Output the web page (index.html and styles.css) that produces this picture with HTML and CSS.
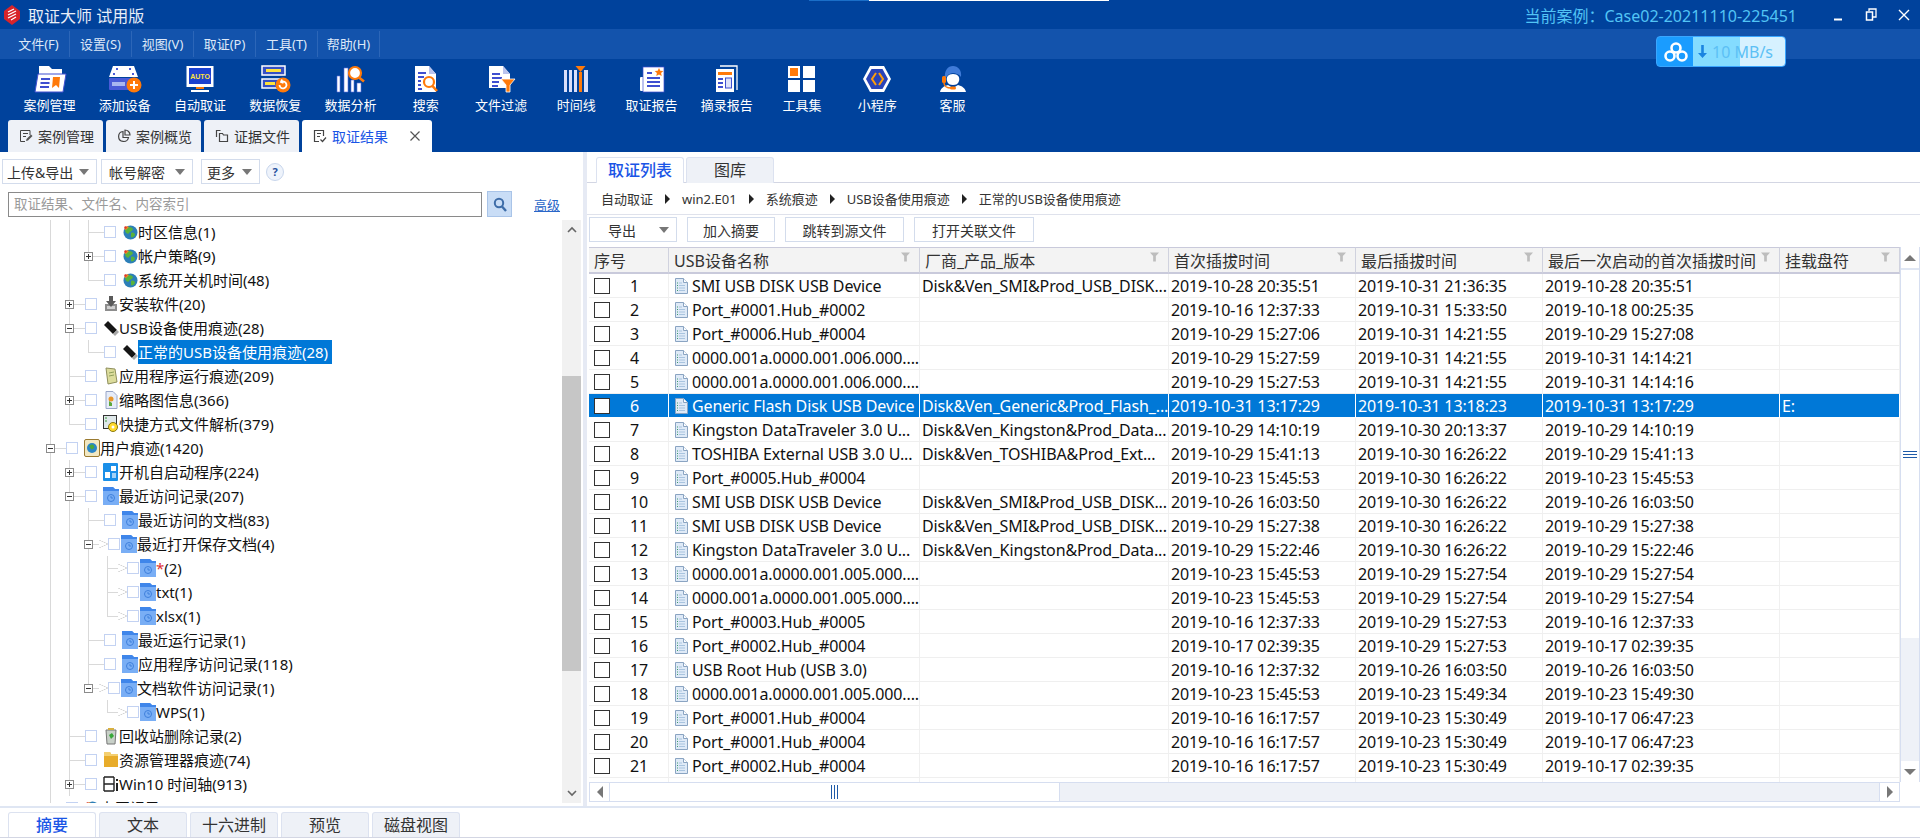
FILE: index.html
```html
<!DOCTYPE html>
<html lang="zh-CN">
<head>
<meta charset="UTF-8" />
<title>取证大师 试用版</title>
<link rel="stylesheet" href="styles.css">
</head>
<body>
<!-- shared icons -->
<svg class="defs" width="0" height="0">
  <symbol id="funnel" viewBox="0 0 10 10"><path d="M0 0h10L6.500 4v6h-3V4z" fill="#bdbdbd"/></symbol>
  <symbol id="file" viewBox="0 0 14 16"><path d="M1.500.5h8l4 4v11h-12z" fill="#dfeaf7" stroke="#8aa4c2"/><path d="M9.500.5v4h4" fill="#fff" stroke="#8aa4c2"/><path d="M3 5h1M3 7.500h1M3 10h1M3 12.500h1" stroke="#3d9a6a"/><path d="M5 5h3M5 7.500h6M5 10h6M5 12.500h6" stroke="#a9c4df"/></symbol>
  <symbol id="recent" viewBox="0 0 16 18"><path d="M0 0h10l2 2h4v16H0z" fill="#79aef5"/><path d="M0 0h10l2 2h4v2H0z" fill="#3f86ea"/><circle cx="8" cy="11" r="3.500" fill="none" stroke="#3f80dc"/><path d="M8 9v2h2" fill="none" stroke="#3f80dc"/></symbol>
  <symbol id="globe" viewBox="0 0 16 16"><circle cx="8.500" cy="8.500" r="7" fill="#2c7fb8"/><path d="M4 4c3-2 6-1 7 1-1 3-3 2-4 4S4 9 3 7z" fill="#58b33c"/><path d="M9 9c2-1 4 0 4 2-1 2-3 3-4 2z" fill="#58b33c"/><path d="M2 5l3-3 2 1-3 3z" fill="#f08a24"/><path d="M3 2l2 1-1 2-2-1z" fill="#e0392b"/></symbol>
  <symbol id="usb" viewBox="0 0 16 16"><path d="M1 5l4-4 9 9-4 4z" fill="#161616"/><path d="M10 14l4-4 2 2-4 4z" fill="#a8a8a8"/></symbol>
</svg>

<div class="titlebar">
  <svg class="logo" width="16" height="20" viewBox="0 0 16 20"><path d="M8 0l8 6v8l-8 6-8-6V6z" fill="#d8242a"/><path d="M4 7l6-3M4 10l8-4M4 13l8-4M7 15l5-3" stroke="#fff" stroke-width="1.300"/></svg>
  <span class="app-name">取证大师 试用版</span>
  <span class="case-name">当前案例：Case02-20211110-225451</span>
  <div class="win-btns">
    <svg width="12" height="12" viewBox="0 0 12 12"><path d="M2 10.500h8" stroke="#fff" stroke-width="2"/></svg>
    <svg width="12" height="14" viewBox="0 0 12 14"><path d="M4 3V1h7v8H8" fill="none" stroke="#fff" stroke-width="1.300"/><path d="M1.500 4h6v8h-6z" fill="none" stroke="#fff" stroke-width="1.500"/></svg>
    <svg width="12" height="12" viewBox="0 0 12 12"><path d="M1 1l10 10M11 1L1 11" stroke="#fff" stroke-width="1.400"/></svg>
  </div>
</div>
<div class="top-strip"></div>

<nav class="menubar">
  <span>文件(F)</span><span>设置(S)</span><span>视图(V)</span><span>取证(P)</span><span>工具(T)</span><span>帮助(H)</span>
</nav>

<!-- download speed widget floats above the window -->
<div class="speed">
  <svg class="speed-logo" width="26" height="24" viewBox="0 0 26 24"><g fill="none" stroke="#fff" stroke-width="2.600"><circle cx="13" cy="8" r="4.500"/><circle cx="7" cy="16" r="4.500"/><circle cx="19" cy="16" r="4.500"/></g></svg>
  <svg class="speed-arrow" width="9" height="13" viewBox="0 0 9 13"><path d="M3.200 0h2.600v8H9l-4.500 5L0 8h3.200z" fill="#1a84e0"/></svg>
  <span class="speed-val">10 MB/s</span>
</div>

<div class="toolbar">
  <div class="tool">
    <svg viewBox="0 0 34 28"><path d="M6 1h10l3 3h10v6H6z" fill="#fff"/><path d="M5 9h28l-3 18H2z" fill="#fff" stroke="#3f4fd0"/><path d="M8 14h9M7.500 18h9M7 22h9" stroke="#3f4fd0" stroke-width="2"/><path d="M20 12h7l-1 11-3-3-4 3z" fill="#ff7a0a"/></svg>
    <span>案例管理</span>
  </div>
  <div class="tool">
    <svg viewBox="0 0 34 28"><path d="M5 1h21l4 11H1z" fill="#fff"/><path d="M8 4h2M21 4h2M5 9h2M24 9h2" stroke="#4a5bd8" stroke-width="2"/><rect x="1" y="13" width="28" height="12" rx="1" fill="#4a5bd8"/><rect x="4" y="17" width="13" height="4" fill="#a9b6f0"/><circle cx="26" cy="20" r="7.500" fill="#ff7a0a"/><path d="M26 16v8M22 20h8" stroke="#fff" stroke-width="2"/></svg>
    <span>添加设备</span>
  </div>
  <div class="tool">
    <svg viewBox="0 0 34 28"><rect x="3.500" y="1" width="27" height="21" fill="#fff"/><rect x="6" y="3" width="22" height="16" fill="#1c42d0"/><text class="auto" x="17" y="14" text-anchor="middle">AUTO</text><rect x="13" y="22" width="8" height="2" fill="#ff7a0a"/><rect x="8" y="25" width="18" height="2" fill="#fff"/></svg>
    <span>自动取证</span>
  </div>
  <div class="tool">
    <svg viewBox="0 0 34 28"><rect x="4" y="1" width="23" height="9" fill="#3550c4" stroke="#fff" stroke-width="1.500"/><rect x="8" y="4" width="15" height="3" fill="#ffe23c"/><rect x="4" y="14" width="19" height="9" fill="#3550c4" stroke="#fff" stroke-width="1.500"/><rect x="7" y="17" width="10" height="3" fill="#ffe23c"/><circle cx="25" cy="20" r="7.500" fill="#ff7a0a"/><path d="M21.500 20a3.500 3.500 0 1 0 2-3.200M24 14.500l-1 2.500 2.500 1" fill="none" stroke="#fff" stroke-width="1.800"/></svg>
    <span>数据恢复</span>
  </div>
  <div class="tool">
    <svg viewBox="0 0 34 28"><path d="M3 11h3v16H3zM10 3h4v24h-4zM17 15h3v12h-3zM23 18h4v9h-4z" fill="#fff" stroke="#5a6fe0" stroke-width=".6"/><circle cx="21" cy="8" r="6" fill="#fff" stroke="#ff7a0a" stroke-width="2.200"/><path d="M25 12.500l5 4" stroke="#ff7a0a" stroke-width="2.600"/></svg>
    <span>数据分析</span>
  </div>
  <div class="tool">
    <svg viewBox="0 0 34 28"><path d="M6 1h14l7 8v18H6z" fill="#fff"/><path d="M20 1v8h7" fill="#b9c3ee"/><path d="M9 8h8M9 12h6M9 16h3M9 20h3M9 24h4" stroke="#3f4fd0" stroke-width="1.800"/><circle cx="20" cy="17" r="5" fill="#fff" stroke="#ff7a0a" stroke-width="2.200"/><path d="M23.500 21l4.500 5" stroke="#ff7a0a" stroke-width="2.600"/></svg>
    <span>搜索</span>
  </div>
  <div class="tool">
    <svg viewBox="0 0 34 28"><path d="M5 1h14l7 8v14H5z" fill="#fff"/><path d="M19 1v8h7" fill="#b9c3ee"/><path d="M8 9h8M8 13h10M8 17h7M8 21h6" stroke="#3f4fd0" stroke-width="1.800"/><path d="M17 14h14l-5 6v7h-4v-7z" fill="#ff7a0a" stroke="#fff" stroke-width=".8"/></svg>
    <span>文件过滤</span>
  </div>
  <div class="tool">
    <svg viewBox="0 0 34 28"><path d="M5 5h3v22H5zM10 5h3v22h-3zM15 5h3v22h-3zM25 5h4v22h-4z" fill="#d9defa"/><path d="M20 7h3v20h-3z" fill="#ff7a0a"/><path d="M16.500 1h10l-5 6z" fill="#ff7a0a"/></svg>
    <span>时间线</span>
  </div>
  <div class="tool">
    <svg viewBox="0 0 34 28"><rect x="5" y="12" width="5" height="14" rx="1" fill="#fff"/><rect x="8" y="2" width="21" height="25" fill="#fff" stroke="#3f4fd0" stroke-width=".7"/><path d="M24 3l1.300 2.800 3 .3-2.200 2 .6 3-2.700-1.500-2.700 1.500.6-3-2.200-2 3-.3z" fill="#ff7a0a"/><path d="M12 8h5M12 13h13M12 17h13M12 21h13" stroke="#3f4fd0" stroke-width="1.800"/></svg>
    <span>取证报告</span>
  </div>
  <div class="tool">
    <svg viewBox="0 0 34 28"><path d="M10 1h17v24" fill="none" stroke="#fff" stroke-width="1.300"/><rect x="6" y="4" width="18" height="23" fill="#fff"/><rect x="8" y="7" width="14" height="3" fill="#ff7a0a"/><path d="M8 14h5M8 18h5M8 22h5" stroke="#3f4fd0" stroke-width="2"/><rect x="15.500" y="13" width="6" height="10" fill="#dde2fa" stroke="#3f4fd0"/></svg>
    <span>摘录报告</span>
  </div>
  <div class="tool">
    <svg viewBox="0 0 34 28"><rect x="3" y="1" width="12" height="12" fill="#fff"/><rect x="5" y="3" width="8" height="8" fill="#ff7a0a"/><rect x="18" y="1" width="12" height="12" fill="#fff"/><rect x="3" y="15" width="12" height="12" fill="#fff"/><rect x="18" y="15" width="12" height="12" fill="#fff"/></svg>
    <span>工具集</span>
  </div>
  <div class="tool">
    <svg viewBox="0 0 34 28"><path d="M10 1h14l7 13-7 13H10L3 14z" fill="#fff"/><path d="M11.500 4h11l5.500 10-5.500 10h-11L6 14z" fill="#2a43b8"/><path d="M16 8l-4 6 4 6M19 8l4 6-4 6" fill="none" stroke="#ff9d0a" stroke-width="2"/></svg>
    <span>小程序</span>
  </div>
  <div class="tool">
    <svg viewBox="0 0 34 28"><path d="M17 9c5 0 7 3 6 7-1 3-3 4-6 4s-5-1-6-4c-1-4 1-7 6-7z" fill="#fff"/><path d="M9 14C8 5 12 1 17 1s9 4 8 11c-2-3-6-4-8-4-3 0-6 2-8 6z" fill="#3f7bd8"/><path d="M4 27c1-4 4-6 8-7l5 3 5-3c4 1 7 3 8 7z" fill="#fff"/><rect x="6" y="11" width="4" height="7" rx="1.500" fill="#ff7a0a"/><path d="M8 18c0 3 3 5 7 5" fill="none" stroke="#ff7a0a" stroke-width="1.500"/><rect x="14" y="21.500" width="6" height="3" rx="1.500" fill="#ff7a0a"/></svg>
    <span>客服</span>
  </div>
</div>

<div class="tabs">
  <div class="tab">
    <svg width="14" height="14" viewBox="0 0 14 14"><path d="M11 6V1.500H1.500v11H6M4 4.500h5M4 7.500h3" fill="none" stroke="#444"/><path d="M7 12l.5-2L12 5.500l1.500 1.500L9 11.500z" fill="#555"/></svg>
    案例管理
  </div>
  <div class="tab">
    <svg width="14" height="14" viewBox="0 0 14 14"><path d="M6 2.500a5 5 0 1 0 5.500 6H6z" fill="none" stroke="#444" stroke-width="1.200"/><path d="M8 1a5 5 0 0 1 5 5H8z" fill="none" stroke="#444" stroke-width="1.200"/></svg>
    案例概览
  </div>
  <div class="tab">
    <svg width="14" height="14" viewBox="0 0 14 14"><path d="M1.500 8V1.500h4M4.500 12.500v-8h3l1 1.500h4v6.500z" fill="none" stroke="#444" stroke-width="1.200"/></svg>
    证据文件
  </div>
  <div class="tab active">
    <svg width="14" height="14" viewBox="0 0 14 14"><path d="M6 12.500H1.500v-11h9V7M4 4.500h4M4 7.500h3" fill="none" stroke="#444" stroke-width="1.200"/><path d="M7.500 10.500l2 2 3.500-4" fill="none" stroke="#444" stroke-width="1.200"/></svg>
    取证结果
    <svg class="tab-close" width="12" height="12" viewBox="0 0 12 12"><path d="M1.500 1.500l9 9M10.500 1.500l-9 9" stroke="#555" stroke-width="1.200"/></svg>
  </div>
</div>

<div class="workspace">
  <!-- left: result tree -->
  <aside class="left-pane">
    <div class="left-btns">
      <button class="btn b-upload">上传&amp;导出<i class="caret"></i></button>
      <button class="btn b-account">帐号解密<i class="caret"></i></button>
      <button class="btn b-more">更多<i class="caret"></i></button>
      <span class="help">?</span>
    </div>
    <div class="search-row">
      <div class="search-box">取证结果、文件名、内容索引</div>
      <div class="search-btn"><svg width="14" height="15" viewBox="0 0 14 15"><circle cx="6" cy="6" r="4.200" fill="none" stroke="#3d6ca8" stroke-width="2"/><path d="M9 9.500l4 4.500" stroke="#3d6ca8" stroke-width="2.400"/></svg></div>
      <a class="adv">高级</a>
    </div>
    <div class="tree-wrap">
      <div class="tree">
        <div class="row"><i class="g v"></i><i class="g v"></i><i class="g w16 t"></i><i class="check"></i><svg class="ic"><use href="#globe"/></svg><span class="txt">时区信息(1)</span></div>
        <div class="row"><i class="g v"></i><i class="g v"></i><i class="g w16 t"><b class="x plus"></b></i><i class="check"></i><svg class="ic"><use href="#globe"/></svg><span class="txt">帐户策略(9)</span></div>
        <div class="row"><i class="g v"></i><i class="g v"></i><i class="g w16 l"></i><i class="check"></i><svg class="ic"><use href="#globe"/></svg><span class="txt">系统开关机时间(48)</span></div>
        <div class="row"><i class="g v"></i><i class="g w16 t"><b class="x plus"></b></i><i class="check"></i><svg class="ic" viewBox="0 0 16 16"><rect x="2" y="8" width="12" height="7" fill="#8d8d8d"/><rect x="4" y="10" width="8" height="3" fill="#d0d0d0"/><path d="M6 0h4v5h3l-5 6-5-6h3z" fill="#5a5a5a"/></svg><span class="txt">安装软件(20)</span></div>
        <div class="row"><i class="g v"></i><i class="g w16 t"><b class="x minus"></b></i><i class="check"></i><svg class="ic"><use href="#usb"/></svg><span class="txt">USB设备使用痕迹(28)</span></div>
        <div class="row"><i class="g v"></i><i class="g v"></i><i class="g w16 l"></i><i class="check"></i><svg class="ic"><use href="#usb"/></svg><span class="txt sel">正常的USB设备使用痕迹(28)</span></div>
        <div class="row"><i class="g v"></i><i class="g w16 t"></i><i class="check"></i><svg class="ic" viewBox="0 0 16 18"><path d="M3 1l9 1 2 13-9 2z" fill="#dcdc9c" stroke="#8f8f5c"/><path d="M6 6l5-1M6 9l5-1" stroke="#8fa05c"/></svg><span class="txt">应用程序运行痕迹(209)</span></div>
        <div class="row"><i class="g v"></i><i class="g w16 t"><b class="x plus"></b></i><i class="check"></i><svg class="ic" viewBox="0 0 16 18"><path d="M3 .5h7l4 4v13H3z" fill="#e6ecf8" stroke="#98a6c8"/><circle cx="8" cy="8" r="2.500" fill="#e8962a"/><path d="M6 10l3 2v3h-3z" fill="#5ca83c"/></svg><span class="txt">缩略图信息(366)</span></div>
        <div class="row"><i class="g v"></i><i class="g w16 l"></i><i class="check"></i><svg class="ic" viewBox="0 0 16 18"><rect x=".5" y=".5" width="13" height="13" fill="#dfe8ea" stroke="#333"/><path d="M2 3h2M2 6h2" stroke="#3a9a3a"/><circle cx="10" cy="12" r="4.500" fill="#ffd92a" stroke="#8a7a10"/><circle cx="10" cy="12" r="1.500" fill="#fff"/></svg><span class="txt">快捷方式文件解析(379)</span></div>
        <div class="row"><i class="g w16 t"><b class="x minus"></b></i><i class="check"></i><svg class="ic" viewBox="0 0 16 18"><rect x=".5" y=".5" width="15" height="17" rx="1.500" fill="#f2e8c2" stroke="#9a7a30"/><circle cx="8" cy="9" r="5" fill="#2a86c8"/><path d="M5 7c2-2 4-2 5 0s-2 4-3 3z" fill="#4aa83a"/></svg><span class="txt">用户痕迹(1420)</span></div>
        <div class="row"><i class="g v"></i><i class="g w16 t"><b class="x plus"></b></i><i class="check"></i><svg class="ic" viewBox="0 0 16 18"><rect width="15" height="18" rx="1" fill="#1a8fe8"/><path d="M8 3h5v5H8zM2 9h5v6H2z" fill="#fff"/><path d="M9 10h4v5h-4z" fill="#fff" opacity=".6"/></svg><span class="txt">开机自启动程序(224)</span></div>
        <div class="row"><i class="g v"></i><i class="g w16 t"><b class="x minus"></b></i><i class="check"></i><svg class="ic"><use href="#recent"/></svg><span class="txt">最近访问记录(207)</span></div>
        <div class="row"><i class="g v"></i><i class="g v"></i><i class="g w16 t"></i><i class="check"></i><svg class="ic"><use href="#recent"/></svg><span class="txt">最近访问的文档(83)</span></div>
        <div class="row"><i class="g v"></i><i class="g v"></i><i class="g w11 t"><b class="x minus"></b></i><i class="tri"></i><i class="check tight"></i><svg class="ic"><use href="#recent"/></svg><span class="txt">最近打开保存文档(4)</span></div>
        <div class="row"><i class="g v"></i><i class="g v"></i><i class="g v"></i><i class="g w11 t"></i><i class="tri"></i><i class="check tight"></i><svg class="ic"><use href="#recent"/></svg><span class="txt"><em>*</em>(2)</span></div>
        <div class="row"><i class="g v"></i><i class="g v"></i><i class="g v"></i><i class="g w11 t"></i><i class="tri"></i><i class="check tight"></i><svg class="ic"><use href="#recent"/></svg><span class="txt">txt(1)</span></div>
        <div class="row"><i class="g v"></i><i class="g v"></i><i class="g v"></i><i class="g w11 l"></i><i class="tri"></i><i class="check tight"></i><svg class="ic"><use href="#recent"/></svg><span class="txt">xlsx(1)</span></div>
        <div class="row"><i class="g v"></i><i class="g v"></i><i class="g w16 t"></i><i class="check"></i><svg class="ic"><use href="#recent"/></svg><span class="txt">最近运行记录(1)</span></div>
        <div class="row"><i class="g v"></i><i class="g v"></i><i class="g w16 t"></i><i class="check"></i><svg class="ic"><use href="#recent"/></svg><span class="txt">应用程序访问记录(118)</span></div>
        <div class="row"><i class="g v"></i><i class="g v"></i><i class="g w11 l"><b class="x minus"></b></i><i class="tri"></i><i class="check tight"></i><svg class="ic"><use href="#recent"/></svg><span class="txt">文档软件访问记录(1)</span></div>
        <div class="row"><i class="g v"></i><i class="g v"></i><i class="g"></i><i class="g w11 l"></i><i class="tri"></i><i class="check tight"></i><svg class="ic"><use href="#recent"/></svg><span class="txt">WPS(1)</span></div>
        <div class="row"><i class="g v"></i><i class="g w16 t"></i><i class="check"></i><svg class="ic" viewBox="0 0 16 18"><path d="M3 3h10l-1 14H4z" fill="#c8d0c8" stroke="#777"/><path d="M5 1h6v2H5z" fill="#d8b040"/><path d="M6 8l3-2 2 3-3 3z" fill="#3aa83a"/></svg><span class="txt">回收站删除记录(2)</span></div>
        <div class="row"><i class="g v"></i><i class="g w16 t"></i><i class="check"></i><svg class="ic" viewBox="0 0 16 18"><path d="M1 1h6l1 2h7v13H1z" fill="#e8ac2a"/><path d="M1 1h6l1 2h7v2H1z" fill="#f4cf70"/></svg><span class="txt">资源管理器痕迹(74)</span></div>
        <div class="row"><i class="g v"></i><i class="g w16 t"><b class="x plus"></b></i><i class="check"></i><svg class="ic" viewBox="0 0 16 18"><path d="M1 2v14M11 2v14M1 2h10M1 9h10M1 16h10" fill="none" stroke="#222" stroke-width="1.400"/><path d="M14 4v2M14 8v8" stroke="#222" stroke-width="2"/></svg><span class="txt">Win10 时间轴(913)</span></div>
        <div class="row"><i class="g w16 t"><b class="x plus"></b></i><i class="check"></i><svg class="ic"><use href="#globe"/></svg><span class="txt">上网记录</span></div>
      </div>
      <div class="tree-scroll">
        <svg class="chev" width="10" height="8" viewBox="0 0 10 8"><path d="M1 6l4-4 4 4" fill="none" stroke="#666" stroke-width="1.600"/></svg>
        <div class="tree-thumb"></div>
        <svg class="chev chev-end" width="10" height="8" viewBox="0 0 10 8"><path d="M1 2l4 4 4-4" fill="none" stroke="#666" stroke-width="1.600"/></svg>
      </div>
    </div>
  </aside>

  <div class="splitter"></div>

  <!-- right: evidence list -->
  <main class="right-pane">
    <div class="sub-tabs">
      <div class="sub-tab active">取证列表</div>
      <div class="sub-tab">图库</div>
    </div>
    <div class="crumbs">
      <span>自动取证</span><i class="sep"></i><span>win2.E01</span><i class="sep"></i><span>系统痕迹</span><i class="sep"></i><span>USB设备使用痕迹</span><i class="sep"></i><span>正常的USB设备使用痕迹</span>
    </div>
    <div class="actions">
      <button class="btn act-export">导出<i class="caret"></i></button>
      <button class="btn act-add">加入摘要</button>
      <button class="btn act-jump">跳转到源文件</button>
      <button class="btn act-open">打开关联文件</button>
    </div>
    <div class="grid-wrap">
      <div class="grid">
        <table>
          <colgroup><col class="c1"><col class="c2"><col class="c3"><col class="c4"><col class="c5"><col class="c6"><col class="c7"></colgroup>
          <thead>
            <tr>
              <th>序号</th>
              <th class="pad"><div class="th-in">USB设备名称<svg class="fn"><use href="#funnel"/></svg></div></th>
              <th><div class="th-in">厂商_产品_版本<svg class="fn"><use href="#funnel"/></svg></div></th>
              <th><div class="th-in">首次插拔时间<svg class="fn"><use href="#funnel"/></svg></div></th>
              <th><div class="th-in">最后插拔时间<svg class="fn"><use href="#funnel"/></svg></div></th>
              <th><div class="th-in">最后一次启动的首次插拔时间<svg class="fn"><use href="#funnel"/></svg></div></th>
              <th><div class="th-in">挂载盘符<svg class="fn"><use href="#funnel"/></svg></div></th>
            </tr>
          </thead>
          <tbody>
            <tr><td><div class="no"><i class="box"></i>1</div></td><td><div class="nm"><svg class="doc"><use href="#file"/></svg>SMI USB DISK USB Device</div></td><td>Disk&amp;Ven_SMI&amp;Prod_USB_DISK...</td><td>2019-10-28 20:35:51</td><td>2019-10-31 21:36:35</td><td>2019-10-28 20:35:51</td><td></td></tr>
            <tr><td><div class="no"><i class="box"></i>2</div></td><td><div class="nm"><svg class="doc"><use href="#file"/></svg>Port_#0001.Hub_#0002</div></td><td></td><td>2019-10-16 12:37:33</td><td>2019-10-31 15:33:50</td><td>2019-10-18 00:25:35</td><td></td></tr>
            <tr><td><div class="no"><i class="box"></i>3</div></td><td><div class="nm"><svg class="doc"><use href="#file"/></svg>Port_#0006.Hub_#0004</div></td><td></td><td>2019-10-29 15:27:06</td><td>2019-10-31 14:21:55</td><td>2019-10-29 15:27:08</td><td></td></tr>
            <tr><td><div class="no"><i class="box"></i>4</div></td><td><div class="nm"><svg class="doc"><use href="#file"/></svg>0000.001a.0000.001.006.000....</div></td><td></td><td>2019-10-29 15:27:59</td><td>2019-10-31 14:21:55</td><td>2019-10-31 14:14:21</td><td></td></tr>
            <tr><td><div class="no"><i class="box"></i>5</div></td><td><div class="nm"><svg class="doc"><use href="#file"/></svg>0000.001a.0000.001.006.000....</div></td><td></td><td>2019-10-29 15:27:53</td><td>2019-10-31 14:21:55</td><td>2019-10-31 14:14:16</td><td></td></tr>
            <tr class="selected"><td><div class="no"><i class="box"></i>6</div></td><td><div class="nm"><svg class="doc"><use href="#file"/></svg>Generic Flash Disk USB Device</div></td><td>Disk&amp;Ven_Generic&amp;Prod_Flash_...</td><td>2019-10-31 13:17:29</td><td>2019-10-31 13:18:23</td><td>2019-10-31 13:17:29</td><td>E:</td></tr>
            <tr><td><div class="no"><i class="box"></i>7</div></td><td><div class="nm"><svg class="doc"><use href="#file"/></svg>Kingston DataTraveler 3.0 U...</div></td><td>Disk&amp;Ven_Kingston&amp;Prod_Data...</td><td>2019-10-29 14:10:19</td><td>2019-10-30 20:13:37</td><td>2019-10-29 14:10:19</td><td></td></tr>
            <tr><td><div class="no"><i class="box"></i>8</div></td><td><div class="nm"><svg class="doc"><use href="#file"/></svg>TOSHIBA External USB 3.0 U...</div></td><td>Disk&amp;Ven_TOSHIBA&amp;Prod_Ext...</td><td>2019-10-29 15:41:13</td><td>2019-10-30 16:26:22</td><td>2019-10-29 15:41:13</td><td></td></tr>
            <tr><td><div class="no"><i class="box"></i>9</div></td><td><div class="nm"><svg class="doc"><use href="#file"/></svg>Port_#0005.Hub_#0004</div></td><td></td><td>2019-10-23 15:45:53</td><td>2019-10-30 16:26:22</td><td>2019-10-23 15:45:53</td><td></td></tr>
            <tr><td><div class="no"><i class="box"></i>10</div></td><td><div class="nm"><svg class="doc"><use href="#file"/></svg>SMI USB DISK USB Device</div></td><td>Disk&amp;Ven_SMI&amp;Prod_USB_DISK...</td><td>2019-10-26 16:03:50</td><td>2019-10-30 16:26:22</td><td>2019-10-26 16:03:50</td><td></td></tr>
            <tr><td><div class="no"><i class="box"></i>11</div></td><td><div class="nm"><svg class="doc"><use href="#file"/></svg>SMI USB DISK USB Device</div></td><td>Disk&amp;Ven_SMI&amp;Prod_USB_DISK...</td><td>2019-10-29 15:27:38</td><td>2019-10-30 16:26:22</td><td>2019-10-29 15:27:38</td><td></td></tr>
            <tr><td><div class="no"><i class="box"></i>12</div></td><td><div class="nm"><svg class="doc"><use href="#file"/></svg>Kingston DataTraveler 3.0 U...</div></td><td>Disk&amp;Ven_Kingston&amp;Prod_Data...</td><td>2019-10-29 15:22:46</td><td>2019-10-30 16:26:22</td><td>2019-10-29 15:22:46</td><td></td></tr>
            <tr><td><div class="no"><i class="box"></i>13</div></td><td><div class="nm"><svg class="doc"><use href="#file"/></svg>0000.001a.0000.001.005.000....</div></td><td></td><td>2019-10-23 15:45:53</td><td>2019-10-29 15:27:54</td><td>2019-10-29 15:27:54</td><td></td></tr>
            <tr><td><div class="no"><i class="box"></i>14</div></td><td><div class="nm"><svg class="doc"><use href="#file"/></svg>0000.001a.0000.001.005.000....</div></td><td></td><td>2019-10-23 15:45:53</td><td>2019-10-29 15:27:54</td><td>2019-10-29 15:27:54</td><td></td></tr>
            <tr><td><div class="no"><i class="box"></i>15</div></td><td><div class="nm"><svg class="doc"><use href="#file"/></svg>Port_#0003.Hub_#0005</div></td><td></td><td>2019-10-16 12:37:33</td><td>2019-10-29 15:27:53</td><td>2019-10-16 12:37:33</td><td></td></tr>
            <tr><td><div class="no"><i class="box"></i>16</div></td><td><div class="nm"><svg class="doc"><use href="#file"/></svg>Port_#0002.Hub_#0004</div></td><td></td><td>2019-10-17 02:39:35</td><td>2019-10-29 15:27:53</td><td>2019-10-17 02:39:35</td><td></td></tr>
            <tr><td><div class="no"><i class="box"></i>17</div></td><td><div class="nm"><svg class="doc"><use href="#file"/></svg>USB Root Hub (USB 3.0)</div></td><td></td><td>2019-10-16 12:37:32</td><td>2019-10-26 16:03:50</td><td>2019-10-26 16:03:50</td><td></td></tr>
            <tr><td><div class="no"><i class="box"></i>18</div></td><td><div class="nm"><svg class="doc"><use href="#file"/></svg>0000.001a.0000.001.005.000....</div></td><td></td><td>2019-10-23 15:45:53</td><td>2019-10-23 15:49:34</td><td>2019-10-23 15:49:30</td><td></td></tr>
            <tr><td><div class="no"><i class="box"></i>19</div></td><td><div class="nm"><svg class="doc"><use href="#file"/></svg>Port_#0001.Hub_#0004</div></td><td></td><td>2019-10-16 16:17:57</td><td>2019-10-23 15:30:49</td><td>2019-10-17 06:47:23</td><td></td></tr>
            <tr><td><div class="no"><i class="box"></i>20</div></td><td><div class="nm"><svg class="doc"><use href="#file"/></svg>Port_#0001.Hub_#0004</div></td><td></td><td>2019-10-16 16:17:57</td><td>2019-10-23 15:30:49</td><td>2019-10-17 06:47:23</td><td></td></tr>
            <tr><td><div class="no"><i class="box"></i>21</div></td><td><div class="nm"><svg class="doc"><use href="#file"/></svg>Port_#0002.Hub_#0004</div></td><td></td><td>2019-10-16 16:17:57</td><td>2019-10-23 15:30:49</td><td>2019-10-17 02:39:35</td><td></td></tr>
            <tr><td><div class="no"><i class="box"></i></div></td><td><div class="nm"><svg class="doc"><use href="#file"/></svg></div></td><td></td><td></td><td></td><td></td><td></td></tr>
          </tbody>
        </table>
      </div>
      <div class="vbar">
        <div class="vbtn"><i class="up"></i></div>
        <div class="vthumb"><i class="grip-h"></i></div>
        <div class="vtrack"></div>
        <div class="vbtn"><i class="down"></i></div>
      </div>
    </div>
    <div class="hbar">
      <div class="hbtn"><i class="lft"></i></div>
      <div class="hthumb"><i class="grip-v"></i></div>
      <div class="htrack"></div>
      <div class="hbtn"><i class="rgt"></i></div>
    </div>
  </main>
</div>

<div class="bottom-tabs">
  <div class="b-tab active">摘要</div>
  <div class="b-tab">文本</div>
  <div class="b-tab">十六进制</div>
  <div class="b-tab">预览</div>
  <div class="b-tab">磁盘视图</div>
</div>
</body>
</html>
```

FILE: styles.css
```css
/* General */
html, body {
  margin: 0;
  padding: 0;
}
body {
  position: relative;
  width: 1920px;
  height: 840px;
  overflow: hidden;
  background: #fff;
  font-family: "Noto Sans", "Noto Sans CJK SC", sans-serif;
  color: #222;
}
.defs {
  display: block;
  height: 0;
}
i, em {
  font-style: normal;
}

/* Title bar */
.titlebar {
  display: flex;
  align-items: center;
  height: 29px;
  padding-left: 4px;
  background: #00429c;
}
.logo {
  margin-right: 8px;
}
.app-name {
  font-size: 16px;
  color: #e8eef8;
}
.case-name {
  margin-left: auto;
  margin-right: 35px;
  font-size: 16px;
  color: #52c4f5;
}
.win-btns {
  display: flex;
  align-items: center;
  gap: 21px;
  padding-right: 10px;
}
.top-strip {
  position: absolute;
  top: 0;
  left: 809px;
  width: 300px;
  height: 1px;
  background: linear-gradient(90deg, #1a6ec8 0 60px, #fff 60px);
}

/* Menu */
.menubar {
  display: flex;
  align-items: center;
  height: 30px;
  padding-left: 8px;
  background: #1353ac;
}
.menubar span {
  width: 61px;
  height: 26px;
  line-height: 26px;
  text-align: center;
  font-size: 13px;
  color: #dde8f8;
  border-right: 1px solid #2c66b8;
}

/* Speed widget */
.speed {
  position: absolute;
  top: 36px;
  left: 1656px;
  display: flex;
  align-items: center;
  width: 130px;
  height: 31px;
  box-sizing: border-box;
  border: 1px solid #3aa6ff;
  border-radius: 4px;
  background: linear-gradient(90deg, #1a9cff 0 36px, #84dcff 36px 83px, #d6f1ff 83px);
  font-size: 16px;
  color: #5cc0f5;
  overflow: hidden;
}
.speed-logo {
  margin-left: 6px;
  margin-right: 9px;
}
.speed-arrow {
  margin-right: 5px;
}
.speed-val {
  white-space: nowrap;
}

/* Toolbar */
.toolbar {
  display: flex;
  height: 61px;
  padding-left: 12px;
  background: #00429c;
}
.tool {
  display: flex;
  flex-direction: column;
  align-items: center;
  width: 75.250px;
  padding-top: 6px;
  box-sizing: border-box;
}
.tool svg {
  width: 34px;
  height: 28px;
}
.tool span {
  margin-top: 3px;
  font-size: 13px;
  line-height: 18px;
  color: #fff;
  white-space: nowrap;
}
.auto {
  font-family: "Liberation Sans", sans-serif;
  font-size: 7px;
  font-weight: bold;
  fill: #ffe23c;
}

/* Main tabs */
.tabs {
  display: flex;
  gap: 3px;
  height: 32px;
  padding-left: 8px;
  background: #00429c;
}
.tab {
  display: flex;
  align-items: center;
  gap: 5px;
  width: 95px;
  padding-left: 11px;
  box-sizing: border-box;
  border-radius: 3px 3px 0 0;
  background: #eef1f7;
  font-size: 14px;
  color: #333;
}
.tab.active {
  width: 130px;
  background: #fff;
  color: #1a55e6;
}
.tab-close {
  margin-left: 16px;
}

/* Layout */
.workspace {
  display: flex;
  height: 654px;
  border-bottom: 2px solid #dfe6f3;
}
.left-pane {
  width: 583px;
  flex: none;
}
.splitter {
  width: 4px;
  flex: none;
  background: #e6eaf4;
}
.right-pane {
  flex: 1;
  min-width: 0;
  padding-top: 5px;
}

/* Buttons */
.btn {
  display: flex;
  align-items: center;
  justify-content: space-between;
  height: 25px;
  padding: 0 7px 0 4px;
  box-sizing: border-box;
  border: 1px solid #d3dcec;
  background: #fff;
  font-family: inherit;
  font-size: 14px;
  color: #333;
}
.caret {
  width: 0;
  height: 0;
  border-left: 5px solid transparent;
  border-right: 5px solid transparent;
  border-top: 6px solid #777;
}

/* Left toolbar */
.left-btns {
  display: flex;
  align-items: center;
  height: 25px;
  padding: 7px 0 0 2px;
}
.b-upload { width: 95px; margin-right: 4px; }
.b-account { width: 92px; margin-right: 8px; padding-left: 7px; }
.b-more { width: 59px; margin-right: 6px; padding-left: 5px; }
.help {
  width: 16px;
  height: 16px;
  line-height: 16px;
  text-align: center;
  border: 1px solid #c8d6ec;
  border-radius: 50%;
  background: #eef3fb;
  font-size: 11px;
  font-weight: bold;
  color: #26509c;
}
.search-row {
  display: flex;
  align-items: center;
  height: 26px;
  padding: 7px 0 3px 8px;
}
.search-box {
  width: 474px;
  height: 25px;
  line-height: 23px;
  padding-left: 5px;
  box-sizing: border-box;
  border: 1px solid #8a8a8a;
  font-size: 13.500px;
  color: #9a9a9a;
}
.search-btn {
  display: flex;
  align-items: center;
  justify-content: center;
  width: 25px;
  height: 26px;
  margin-left: 5px;
  box-sizing: border-box;
  border: 1px solid #a9c4e8;
  background: #c9ddf6;
}
.adv {
  margin-left: 22px;
  font-size: 13px;
  color: #2a66c8;
  text-decoration: underline;
}

/* Tree */
.tree-wrap {
  display: flex;
  height: 583px;
  margin-right: 2px;
}
.tree {
  flex: 1;
  min-width: 0;
  padding-left: 50px;
  overflow: hidden;
}
.row {
  display: flex;
  align-items: center;
  height: 24px;
  font-size: 15px;
  color: #111;
}
.g {
  display: flex;
  align-items: center;
  align-self: stretch;
  flex: none;
  width: 19px;
  --ln: #d9d9d9;
}
.w16 { width: 16px; }
.w11 { width: 11px; }
.g.v {
  background: linear-gradient(var(--ln), var(--ln)) 0 0 / 1px 100% no-repeat;
}
.g.t {
  background:
    linear-gradient(var(--ln), var(--ln)) 0 0 / 1px 100% no-repeat,
    linear-gradient(var(--ln), var(--ln)) 0 12px / 100% 1px no-repeat;
}
.g.l {
  background:
    linear-gradient(var(--ln), var(--ln)) 0 0 / 1px 12px no-repeat,
    linear-gradient(var(--ln), var(--ln)) 0 12px / 100% 1px no-repeat;
}
.x {
  flex: none;
  width: 9px;
  height: 9px;
  margin-left: -4px;
  box-sizing: border-box;
  border: 1px solid #8b8b8b;
}
.x.minus {
  background: #fff linear-gradient(#333, #333) center / 5px 1px no-repeat;
}
.x.plus {
  background:
    linear-gradient(#333, #333) center / 5px 1px no-repeat,
    linear-gradient(#333, #333) center / 1px 5px no-repeat,
    #fff;
}
.tri {
  flex: none;
  width: 0;
  height: 0;
  border-left: 9px solid #fff;
  border-top: 4px solid transparent;
  border-bottom: 4px solid transparent;
  filter: drop-shadow(0 0 .6px #555);
}
.check {
  flex: none;
  width: 12px;
  height: 12px;
  margin-right: 6px;
  box-sizing: border-box;
  border: 1px solid #c3d2f2;
  background: #fff;
}
.check.tight {
  margin-right: 1px;
}
.ic {
  flex: none;
  width: 16px;
  height: 18px;
}
.txt {
  line-height: 24px;
  white-space: nowrap;
}
.txt em {
  color: #e03030;
}
.txt.sel {
  padding-right: 4px;
  background: #0078d7;
  color: #fff;
}
.tree-scroll {
  display: flex;
  flex-direction: column;
  align-items: center;
  width: 19px;
  background: #f1f1f1;
}
.chev {
  flex: none;
  margin-top: 6px;
}
.tree-thumb {
  width: 100%;
  height: 295px;
  margin-top: 142px;
  background: #c6c6c6;
}
.chev-end {
  margin-top: auto;
  margin-bottom: 6px;
}

/* Right tabs and crumbs */
.sub-tabs {
  display: flex;
  gap: 2px;
  height: 26px;
  padding-left: 9px;
  border-bottom: 1px solid #d3d6e3;
  box-sizing: border-box;
}
.sub-tab {
  width: 88px;
  height: 26px;
  line-height: 25px;
  text-align: center;
  box-sizing: border-box;
  border: 1px solid #dce2f0;
  border-bottom: 0;
  border-radius: 3px 3px 0 0;
  background: #eef1f7;
  font-size: 16px;
  color: #333;
}
.sub-tab.active {
  background: #fff;
  color: #1a55e6;
  font-weight: 500;
}
.crumbs {
  display: flex;
  align-items: center;
  gap: 12px;
  height: 32px;
  padding-left: 14px;
  box-sizing: border-box;
  border-bottom: 1px solid #dfe2ec;
  font-size: 13px;
  color: #333;
}
.sep {
  width: 0;
  height: 0;
  border-left: 5px solid #222;
  border-top: 5px solid transparent;
  border-bottom: 5px solid transparent;
}
.actions {
  display: flex;
  gap: 10px;
  height: 32px;
  padding: 2px 0 0 2px;
  box-sizing: border-box;
}
.actions .btn {
  justify-content: center;
  padding: 0;
}
.actions .act-export {
  justify-content: space-between;
  width: 88px;
  padding: 0 7px 0 18px;
}
.act-add { width: 88px; }
.act-jump { width: 119px; }
.act-open { width: 120px; }

/* Grid */
.grid-wrap {
  display: flex;
  height: 535px;
  padding-left: 2px;
}
.grid {
  width: 1311px;
  flex: none;
  overflow: hidden;
}
table {
  width: 1311px;
  table-layout: fixed;
  border-collapse: separate;
  border-spacing: 0;
  font-size: 16px;
  letter-spacing: -.12px;
  color: #111;
}
.c1 { width: 80px; }
.c2 { width: 251px; }
.c3 { width: 249px; }
.c4 { width: 187px; }
.c5 { width: 187px; }
.c6 { width: 237px; }
.c7 { width: 120px; }
th {
  height: 26px;
  padding: 0 0 0 5px;
  box-sizing: border-box;
  border-top: 1px solid #c9cadb;
  border-bottom: 2px solid #c9cadb;
  border-right: 1px solid #d0d2de;
  background: #f3f3f3;
  font-weight: normal;
  text-align: left;
  color: #333;
  letter-spacing: 0;
}
.th-in {
  display: flex;
  align-items: center;
  justify-content: space-between;
  padding-right: 9px;
  white-space: nowrap;
}
.fn {
  width: 9px;
  height: 10px;
  margin-top: -6px;
  flex: none;
}
td {
  height: 24px;
  padding: 0 0 0 2px;
  box-sizing: border-box;
  border-bottom: 1px solid #efefef;
  border-right: 1px solid #f0f0f0;
  white-space: nowrap;
  overflow: hidden;
}
.no {
  display: flex;
  align-items: center;
  padding-left: 3px;
}
.box {
  flex: none;
  width: 16px;
  height: 16px;
  margin-right: 20px;
  box-sizing: border-box;
  border: 1.500px solid #333;
  background: #fff;
}
.nm {
  display: flex;
  align-items: center;
  padding-left: 3px;
}
.doc {
  flex: none;
  width: 14px;
  height: 16px;
  margin-right: 4px;
}
.selected td {
  background: #0078d7;
  border-right-color: #fff;
  border-bottom-color: #fff;
  color: #fff;
}

/* Scrollbars */
.vbar {
  display: flex;
  flex-direction: column;
  width: 20px;
  flex: none;
  box-sizing: border-box;
  border-left: 1px solid #d6def0;
  border-right: 1px solid #d6def0;
}
.vbtn {
  display: flex;
  align-items: center;
  justify-content: center;
  height: 21px;
  flex: none;
  background: #fff;
}
.vbtn:first-child {
  border-bottom: 2px solid #dfe6f3;
}
.vthumb {
  display: flex;
  align-items: center;
  justify-content: center;
  height: 368px;
  flex: none;
  background: #fff;
}
.vtrack {
  flex: 1;
  background: #eef1f7;
}
.grip-h {
  width: 14px;
  height: 5px;
  border-top: 1px solid #1f5aa8;
  border-bottom: 1px solid #1f5aa8;
  background: linear-gradient(#1f5aa8, #1f5aa8) center / 100% 1px no-repeat;
}
.grip-v {
  width: 5px;
  height: 14px;
  border-left: 1px solid #1f5aa8;
  border-right: 1px solid #1f5aa8;
  background: linear-gradient(#1f5aa8, #1f5aa8) center / 1px 100% no-repeat;
}
.up, .down, .lft, .rgt {
  width: 0;
  height: 0;
}
.up {
  border-left: 6px solid transparent;
  border-right: 6px solid transparent;
  border-bottom: 6px solid #777;
}
.down {
  border-left: 6px solid transparent;
  border-right: 6px solid transparent;
  border-top: 6px solid #777;
}
.lft {
  border-top: 6px solid transparent;
  border-bottom: 6px solid transparent;
  border-right: 6px solid #777;
}
.rgt {
  border-top: 6px solid transparent;
  border-bottom: 6px solid transparent;
  border-left: 6px solid #777;
}
.hbar {
  display: flex;
  width: 1311px;
  height: 20px;
  margin-left: 2px;
  box-sizing: border-box;
  border-top: 1px solid #d6def0;
  border-bottom: 1px solid #d6def0;
}
.hbtn {
  display: flex;
  align-items: center;
  justify-content: center;
  width: 21px;
  flex: none;
  box-sizing: border-box;
  border-left: 1px solid #d6def0;
  border-right: 1px solid #d6def0;
  background: #fff;
}
.hthumb {
  display: flex;
  align-items: center;
  justify-content: center;
  width: 449px;
  flex: none;
  border-right: 1px solid #d6def0;
  background: #fff;
}
.htrack {
  flex: 1;
  background: #eef1f7;
}

/* Bottom tabs */
.bottom-tabs {
  display: flex;
  gap: 3px;
  height: 30px;
  padding: 4px 0 0 8px;
  box-sizing: border-box;
  border-bottom: 1px solid #d3d6e3;
}
.b-tab {
  width: 88px;
  line-height: 25px;
  text-align: center;
  box-sizing: border-box;
  border: 1px solid #dce2f0;
  border-bottom: 0;
  border-radius: 3px 3px 0 0;
  background: #eef1f7;
  font-size: 16px;
  color: #333;
}
.b-tab.active {
  background: #fff;
  color: #1a55e6;
  font-weight: 500;
}
```
